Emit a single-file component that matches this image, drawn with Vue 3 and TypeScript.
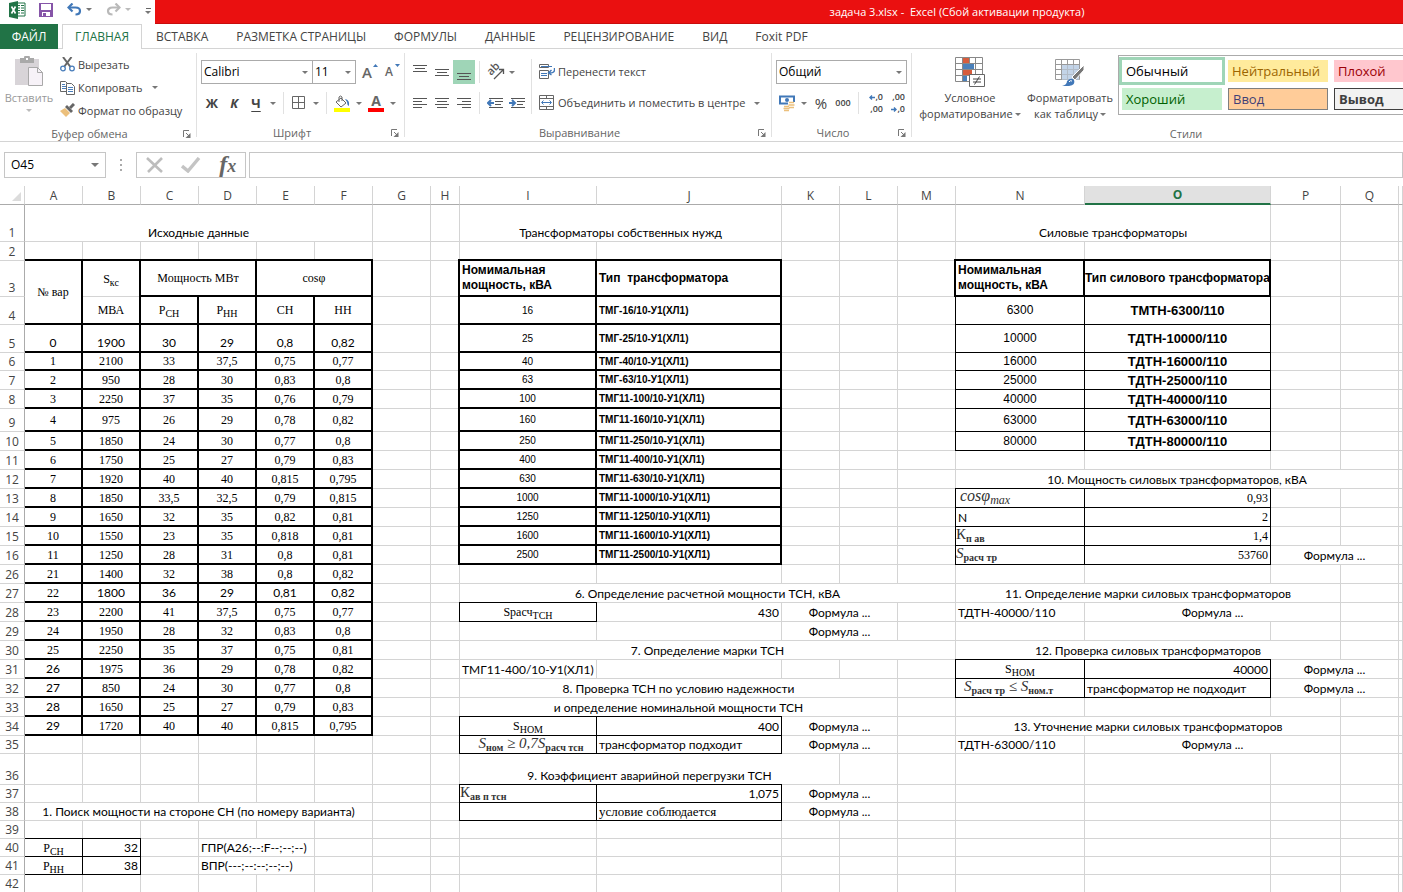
<script setup lang="ts">
import { ref } from 'vue'

interface Cell {
  text: string
  cls: string
  col?: number
  row?: number
}
interface Part {
  t: string
  sub: boolean
}
interface Slot extends Cell {
  key: string
}
interface Row {
  n: number
  h: number
  cells: Slot[]
}

const tabs = ['ГЛАВНАЯ', 'ВСТАВКА', 'РАЗМЕТКА СТРАНИЦЫ', 'ФОРМУЛЫ', 'ДАННЫЕ', 'РЕЦЕНЗИРОВАНИЕ', 'ВИД', 'Foxit PDF']
const activeTab = ref('ГЛАВНАЯ')
const nameBox = ref('O45')
const formula = ref('')

const letters = 'ABCDEFGHIJKLMNOPQR'.split('')
const widths = [58, 58, 58, 58, 58, 58, 58, 29, 137, 185, 58, 58, 58, 129, 186, 70, 58]

const heights: [number, number][] = [
  [1, 37], [2, 19], [3, 36], [4, 28], [5, 28], [6, 18], [7, 19], [8, 19], [9, 23], [10, 19], [11, 19],
  [12, 19], [13, 19], [14, 19], [15, 19], [16, 19], [26, 19], [27, 19], [28, 19], [29, 19], [30, 19],
  [31, 19], [32, 19], [33, 19], [34, 19], [35, 18], [36, 31], [37, 18], [38, 18], [39, 18], [40, 18],
  [41, 18], [42, 18],
]

const sheet: Record<string, Cell> = {}
const put = (at: string, text: string, cls: string, col = 1, row = 1): void => {
  sheet[at] = { text, cls, col, row }
}

put('A1', 'Исходные данные', 'c', 6)
put('I1', 'Трансформаторы собственных нужд', 'c', 2)
put('N1', 'Силовые трансформаторы', 'c', 2)

put('A3', '№ вар', 'thick serif', 1, 2)
put('B3', 'S_{кс}', 'thick serif open-bottom')
put('C3', 'Мощность МВт', 'thick serif', 2)
put('E3', 'cosφ', 'thick serif', 2)
put('B4', 'МВА', 'thick serif open-top')
put('C4', 'P_{СН}', 'thick serif')
put('D4', 'P_{НН}', 'thick serif')
put('E4', 'СН', 'thick serif')
put('F4', 'НН', 'thick serif')

const variants: [number, string][] = [
  [5, '0 1900 30 29 0,8 0,82'],
  [6, '1 2100 33 37,5 0,75 0,77'],
  [7, '2 950 28 30 0,83 0,8'],
  [8, '3 2250 37 35 0,76 0,79'],
  [9, '4 975 26 29 0,78 0,82'],
  [10, '5 1850 24 30 0,77 0,8'],
  [11, '6 1750 25 27 0,79 0,83'],
  [12, '7 1920 40 40 0,815 0,795'],
  [13, '8 1850 33,5 32,5 0,79 0,815'],
  [14, '9 1650 32 35 0,82 0,81'],
  [15, '10 1550 23 35 0,818 0,81'],
  [16, '11 1250 28 31 0,8 0,81'],
  [26, '21 1400 32 38 0,8 0,82'],
  [27, '22 1800 36 29 0,81 0,82'],
  [28, '23 2200 41 37,5 0,75 0,77'],
  [29, '24 1950 28 32 0,83 0,8'],
  [30, '25 2250 35 37 0,75 0,81'],
  [31, '26 1975 36 29 0,78 0,82'],
  [32, '27 850 24 30 0,77 0,8'],
  [33, '28 1650 25 27 0,79 0,83'],
  [34, '29 1720 40 40 0,815 0,795'],
]
for (const [row, line] of variants) {
  line.split(' ').forEach((value, i) => {
    const plain = row === 5 || (row === 27 && i > 0) || (row > 30 && i === 0)
    put(letters[i] + row, value, plain ? 'thick c' : 'thick serif')
  })
}

put('I3', 'Номимальная мощность, кВА', 'thick arial-b')
put('J3', 'Тип\u00a0 трансформатора', 'thick arial-b')
const ownNeeds = ['16', '25', '40', '63', '100', '160', '250', '400', '630', '1000', '1250', '1600', '2500']
ownNeeds.forEach((power, i) => {
  put('I' + (i + 4), power, 'thick small')
  put('J' + (i + 4), `ТМГ${i > 3 ? '11' : ''}-${power}/10-У1(ХЛ1)`, 'thick small-b')
})

put('N3', 'Номимальная мощность, кВА', 'thick arial-b')
put('O3', 'Тип силового трансформатора', 'thick arial-b c')
;['6300', '10000', '16000', '25000', '40000', '63000', '80000'].forEach((power, i) => {
  put('N' + (i + 4), power, 'thin arial')
  put('O' + (i + 4), `${i ? 'ТДТН' : 'ТМТН'}-${power}/110`, 'thin arial-b c brand')
})

put('N12', '10. Мощность силовых трансформаторов, кВА', 'c', 4)
put('N13', 'cosφ_{max}', 'thin math italic')
put('O13', '0,93', 'thin serif r')
put('N14', 'N', 'thin')
put('O14', '2', 'thin serif r')
put('N15', 'К_{п ав}', 'thin math flush')
put('O15', '1,4', 'thin serif r')
put('N16', 'S_{расч тр}', 'thin math flush slant')
put('O16', '53760', 'thin serif r')

put('I27', '6. Определение расчетной мощности ТСН, кВА', 'c', 5)
put('I28', 'Sрасч_{ТСН}', 'thin serif')
put('J28', '430', 'r')
put('I30', '7. Определение марки ТСН', 'c', 5)
put('I31', 'ТМГ11-400/10-У1(ХЛ1)', '')
put('I32', '8. Проверка ТСН по условию надежности', 'c', 4)
put('I33', 'и определение номинальной мощности ТСН', 'c', 4)
put('I34', 'S_{НОМ}', 'thin serif')
put('J34', '400', 'thin r')
put('I35', 'S_{ном} ≥ 0,7S_{расч тсн}', 'thin math slant c')
put('J35', 'трансформатор подходит', 'thin')
put('I36', '9. Коэффициент аварийной перегрузки ТСН', 'c', 3)
put('I37', 'К_{ав п тсн}', 'thin math flush')
put('J37', '1,075', 'thin r')
put('I38', '', 'thin')
put('J38', 'условие соблюдается', 'thin serif l')

put('N27', '11. Определение марки силовых трансформаторов', 'c', 3)
put('N28', 'ТДТН-40000/110', '')
put('N30', '12. Проверка силовых трансформаторов', 'c', 3)
put('N31', 'S_{НОМ}', 'thin serif')
put('O31', '40000', 'thin r')
put('N32', 'S_{расч тр} ≤ S_{ном.т}', 'thin math slant')
put('O32', 'трансформатор не подходит', 'thin')
put('N34', '13. Уточнение марки силовых трансформаторов', 'c', 3)
put('N35', 'ТДТН-63000/110', '')
for (const at of ['K28', 'K29', 'K34', 'K35', 'K37', 'K38', 'P16', 'P31', 'P32', 'O28', 'O35']) {
  put(at, 'Формула ...', 'c', 2)
}

put('A38', '1. Поиск мощности на стороне СН (по номеру варианта)', 'c', 6)
put('A40', 'P_{СН}', 'thin serif')
put('B40', '32', 'thin r')
put('D40', 'ГПР(A26;--:F--;--;--)', '', 2)
put('A41', 'P_{НН}', 'thin serif')
put('B41', '38', 'thin r')
put('D41', 'ВПР(---;--:--;--;--)', '', 2)

const covered = new Set<string>(['A4'])
const rows: Row[] = heights.map(([n, h]) => {
  const cells: Slot[] = []
  letters.forEach((letter, i) => {
    const key = letter + n
    if (covered.has(key)) return
    const cell = sheet[key] ?? { text: '', cls: '' }
    for (let k = 1; k < (cell.col ?? 1); k++) covered.add(letters[i + k] + n)
    cells.push({ ...cell, key })
  })
  return { n, h, cells }
})

const parts = (text: string): Part[] =>
  text.split(/_\{(.+?)\}/).map((t, i) => ({ t, sub: i % 2 === 1 })).filter((p) => p.t !== '')
</script>

<template>
  <div class="app">
    <header class="titlebar">
      <div class="quick">
        <svg class="logo" width="18" height="18" viewBox="0 0 18 18">
          <path d="M8 2h9v13H8z" fill="#fff" stroke="#217346" />
          <path d="M10 4.500h2M13 4.500h3M10 7h2M13 7h3M10 9.500h2M13 9.500h3M10 12h2M13 12h3" stroke="#217346" />
          <path d="M1 2l9-2v18l-9-2z" fill="#217346" />
          <path d="M3.500 5.500l4 7M7.500 5.500l-4 7" stroke="#fff" stroke-width="1.600" />
        </svg>
        <button class="q" aria-label="Сохранить">
          <svg width="14" height="14" viewBox="0 0 14 14">
            <path d="M0 0h14v14H0z" fill="#8655a8" /><path d="M2 1h10v6H2z" fill="#fff" />
            <path d="M3 9h8v4H3z" fill="#fff" /><path d="M4 10h3v3H4z" fill="#8655a8" />
          </svg>
        </button>
        <button class="q" aria-label="Отменить">
          <svg width="15" height="13" viewBox="0 0 15 13">
            <path d="M2 4.500h6.500c6 0 6 7 0 7" fill="none" stroke="#4178b8" stroke-width="2.200" />
            <path d="M5.500 .5L1.500 4.500l4 4" fill="none" stroke="#4178b8" stroke-width="2.200" />
          </svg>
          <i class="arr"></i>
        </button>
        <button class="q" aria-label="Вернуть">
          <svg width="15" height="13" viewBox="0 0 15 13">
            <path d="M13 4.500H6.500c-6 0-6 7 0 7" fill="none" stroke="#b9b9b9" stroke-width="2.200" />
            <path d="M9.500 .5l4 4-4 4" fill="none" stroke="#b9b9b9" stroke-width="2.200" />
          </svg>
          <i class="arr pale"></i>
        </button>
        <button class="q more" aria-label="Настройка панели"><i class="bar"></i><i class="arr"></i></button>
      </div>
      <div class="title">задача 3.xlsx -&nbsp; Excel (Сбой активации продукта)</div>
    </header>

    <nav class="tabs">
      <button class="file">ФАЙЛ</button>
      <button
        v-for="tab in tabs"
        :key="tab"
        class="tab"
        :class="{ on: tab === activeTab }"
        @click="activeTab = tab"
      >{{ tab }}</button>
    </nav>

    <section class="ribbon">
      <div class="group clip">
        <div class="body">
          <button class="paste">
            <svg width="30" height="31" viewBox="0 0 30 31">
              <path d="M1 3h24v26H1z" fill="#d8d4d8" />
              <path d="M6 2h4a3 3 0 0 1 6 0h4v5H6z" fill="#a9a9a9" /><path d="M12 2h2v2h-2z" fill="#fff" />
              <path d="M14.500 11.500h9l5 5v13h-14z" fill="#f7f2f8" stroke="#a9a9a9" />
              <path d="M23.500 11.500v5h5" fill="none" stroke="#a9a9a9" />
            </svg>
            <span>Вставить</span>
            <i class="arr pale"></i>
          </button>
          <div class="list">
            <button class="line">
              <svg width="15" height="15" viewBox="0 0 15 15">
                <path d="M3 0l7.500 10M11.500 0L4 10" stroke="#666" stroke-width="2" />
                <circle cx="3" cy="11.500" r="2.300" fill="none" stroke="#4a7ebb" stroke-width="1.300" />
                <circle cx="12" cy="11.500" r="2.300" fill="none" stroke="#4a7ebb" stroke-width="1.300" />
              </svg>Вырезать
            </button>
            <button class="line">
              <svg width="15" height="15" viewBox="0 0 15 15">
                <path d="M.5 1.500h5l2 2v8h-7z" fill="#fff" stroke="#666" />
                <path d="M2 4.500h3M2 6.500h4M2 8.500h4" stroke="#4a7ebb" />
                <path d="M6.500 3.500h5l3 3v8h-8z" fill="#fff" stroke="#666" />
                <path d="M8 7.500h5M8 9.500h5M8 11.500h5" stroke="#4a7ebb" />
              </svg>Копировать<i class="arr gap"></i>
            </button>
            <button class="line">
              <svg width="15" height="15" viewBox="0 0 15 15">
                <path d="M0 8l5-3 5 5-4 4z" fill="#ecc07c" />
                <path d="M5 4l2-2 6 6-2 2z" fill="#666" /><path d="M10 5l4-4" stroke="#666" stroke-width="3" />
              </svg>Формат по образцу
            </button>
          </div>
        </div>
        <footer><span>Буфер обмена</span><button class="launch" aria-label="Буфер обмена"><svg width="8" height="8" viewBox="0 0 8 8"><path d="M.5 7V.5H6M3 3l3 3" fill="none" stroke="#777" /><path d="M7.500 3v5h-5z" fill="#777" /></svg></button></footer>
      </div>

      <div class="group">
        <div class="body rows">
          <div class="r1">
            <span class="pick family"><select aria-label="Шрифт"><option>Calibri</option></select><i class="arr"></i></span>
            <span class="pick size"><select aria-label="Размер"><option>11</option></select><i class="arr"></i></span>
            <button class="ic" aria-label="Увеличить размер шрифта"><span class="big-a">A</span><svg class="tip" width="5" height="3"><path d="M0 3l2.500-3L5 3z" fill="#4178b8" /></svg></button>
            <button class="ic" aria-label="Уменьшить размер шрифта"><span class="small-a">A</span><svg class="tip" width="5" height="3"><path d="M0 0h5L2.500 3z" fill="#4178b8" /></svg></button>
          </div>
          <div class="r1">
            <button class="ic b">Ж</button>
            <button class="ic b it">К</button>
            <button class="ic b un">Ч</button>
            <button class="dd" aria-label="Подчеркивание"><i class="arr"></i></button>
            <i class="sep"></i>
            <button class="ic" aria-label="Границы">
              <svg width="14" height="14" viewBox="0 0 14 14"><path d="M.5 .5h12v12H.5zM6.500 .5v12M.5 6.500h12" fill="none" stroke="#666" /></svg>
            </button>
            <button class="dd" aria-label="Виды границ"><i class="arr"></i></button>
            <i class="sep"></i>
            <button class="ic" aria-label="Цвет заливки">
              <svg width="16" height="17" viewBox="0 0 16 17">
                <path d="M7 3l5 5-5 4-5-5z" fill="#fff" stroke="#666" /><path d="M5 7V2q1.500-2 3 0v4" fill="none" stroke="#666" />
                <path d="M11 4q5 1 4 7-2-1-2-4z" fill="#4178b8" /><path d="M0 13h16v4H0z" fill="#ff0" />
              </svg>
            </button>
            <button class="dd" aria-label="Цвета заливки"><i class="arr"></i></button>
            <button class="ic color" aria-label="Цвет текста"><span>A</span></button>
            <button class="dd" aria-label="Цвета текста"><i class="arr"></i></button>
          </div>
        </div>
        <footer><span>Шрифт</span><button class="launch" aria-label="Шрифт"><svg width="8" height="8" viewBox="0 0 8 8"><path d="M.5 7V.5H6M3 3l3 3" fill="none" stroke="#777" /><path d="M7.500 3v5h-5z" fill="#777" /></svg></button></footer>
      </div>

      <div class="group align">
        <div class="body">
          <div class="rows">
            <div class="r1">
              <button class="ic" aria-label="По верхнему краю"><svg width="14" height="16"><path d="M0 1.500h14M2 4.500h10M0 7.500h14" stroke="#555" /></svg></button>
              <button class="ic" aria-label="По середине"><svg width="14" height="16"><path d="M0 5.500h14M2 8.500h10M0 11.500h14" stroke="#555" /></svg></button>
              <button class="ic on" aria-label="По нижнему краю"><svg width="14" height="16"><path d="M0 9.500h14M2 12.500h10M0 15.500h14" stroke="#555" /></svg></button>
              <i class="sep"></i>
              <button class="ic" aria-label="Ориентация">
                <svg class="turn" width="17" height="16" viewBox="0 0 17 16">
                  <text x="4" y="12" transform="rotate(-45 4 12)" font-family="Open Sans, sans-serif" font-size="11" fill="#555" font-weight="600">ab</text>
                  <path d="M7 15l9-9M12 5.500h4.500V10" fill="none" stroke="#555" stroke-width="1.300" />
                </svg>
              </button>
              <button class="dd" aria-label="Варианты ориентации"><i class="arr"></i></button>
            </div>
            <div class="r1">
              <button class="ic" aria-label="По левому краю"><svg width="14" height="12"><path d="M0 1.500h14M0 4.500h9M0 7.500h14M0 10.500h9" stroke="#555" /></svg></button>
              <button class="ic" aria-label="По центру"><svg width="14" height="12"><path d="M0 1.500h14M2 4.500h10M0 7.500h14M2 10.500h10" stroke="#555" /></svg></button>
              <button class="ic" aria-label="По правому краю"><svg width="14" height="12"><path d="M0 1.500h14M5 4.500h9M0 7.500h14M5 10.500h9" stroke="#555" /></svg></button>
              <i class="sep"></i>
              <button class="ic" aria-label="Уменьшить отступ">
                <svg width="16" height="12"><path d="M2 1.500h14M8 4.500h8M8 7.500h6M2 10.500h14" stroke="#555" /><path d="M7 6H2M4 3L1 6l3 3" fill="none" stroke="#4178b8" stroke-width="2" /></svg>
              </button>
              <button class="ic" aria-label="Увеличить отступ">
                <svg width="16" height="12"><path d="M2 1.500h14M8 4.500h8M8 7.500h6M2 10.500h14" stroke="#555" /><path d="M0 6h5M3 3l3 3-3 3" fill="none" stroke="#4178b8" stroke-width="2" /></svg>
              </button>
            </div>
          </div>
          <i class="sep tall"></i>
          <div class="rows">
            <button class="line r1">
              <svg width="16" height="16" viewBox="0 0 16 16">
                <path d="M.5 .5h9v3h-9zM.5 6.500h9v8h-9z" fill="#fff" stroke="#666" /><path d="M2 2.500h11M2 9.500h6M2 11.500h6" stroke="#4178b8" />
                <path d="M15.500 4v2q0 3-5 3M12.500 6l-3 3 3 2" fill="none" stroke="#4178b8" stroke-width="1.400" />
              </svg>Перенести текст
            </button>
            <button class="line r1">
              <svg width="16" height="16" viewBox="0 0 16 16">
                <path d="M.5 .5h14v14H.5zM.5 3.500h14M.5 11.500h14M7.500 .5v3M7.500 11.500v3" fill="none" stroke="#666" />
                <path d="M3 7.500h9M4.500 5.500l-2 2 2 2M10.500 5.500l2 2-2 2" fill="none" stroke="#4178b8" />
              </svg>Объединить и поместить в центре<i class="arr gap"></i>
            </button>
          </div>
        </div>
        <footer><span>Выравнивание</span><button class="launch" aria-label="Выравнивание"><svg width="8" height="8" viewBox="0 0 8 8"><path d="M.5 7V.5H6M3 3l3 3" fill="none" stroke="#777" /><path d="M7.500 3v5h-5z" fill="#777" /></svg></button></footer>
      </div>

      <div class="group">
        <div class="body rows">
          <div class="r1">
            <span class="pick number"><select aria-label="Числовой формат"><option>Общий</option></select><i class="arr"></i></span>
          </div>
          <div class="r1">
            <button class="ic" aria-label="Финансовый формат">
              <svg width="17" height="17" viewBox="0 0 17 17">
                <path d="M1 1.500h14v7H1z" fill="#fff" stroke="#4178b8" stroke-width="2" /><circle cx="8" cy="5" r="2" fill="#4178b8" />
                <path d="M9 7h7v8H9zM4 11h7v5H4z" fill="#fff" />
                <path d="M10 7.500h5M9.500 10h6M10 12.500h5M5 11.500h5M4.500 13.500h6M5 15.500h5" stroke="#ecc07c" stroke-width="1.600" />
              </svg>
            </button>
            <button class="dd" aria-label="Валюты"><i class="arr"></i></button>
            <button class="ic pct">%</button>
            <button class="ic zeros">000</button>
            <i class="sep"></i>
            <button class="ic dec" aria-label="Увеличить разрядность">
              <span><svg width="6" height="5"><path d="M6 2.500H1M3 .5l-2 2 2 2" fill="none" stroke="#4178b8" stroke-width="1.400" /></svg>,0</span><span>,00</span>
            </button>
            <button class="ic dec" aria-label="Уменьшить разрядность">
              <span>,00</span><span><svg width="6" height="5"><path d="M0 2.500h5M3 .5l2 2-2 2" fill="none" stroke="#4178b8" stroke-width="1.400" /></svg>,0</span>
            </button>
          </div>
        </div>
        <footer><span>Число</span><button class="launch" aria-label="Число"><svg width="8" height="8" viewBox="0 0 8 8"><path d="M.5 7V.5H6M3 3l3 3" fill="none" stroke="#777" /><path d="M7.500 3v5h-5z" fill="#777" /></svg></button></footer>
      </div>

      <div class="group styles">
        <div class="body">
          <button class="large cond">
            <svg width="30" height="31" viewBox="0 0 30 31">
              <path d="M.5 .5h27v24H.5z" fill="#fff" /><path d="M8 0h6v6H8zM8 13h9v5H8z" fill="#d65c3c" /><path d="M8 7h11v5H8zM8 19h4v6H8z" fill="#4a80ba" />
              <path d="M.5 .5h27v24H.5zM.5 6.500h27M.5 12.500h27M.5 18.500h27M7.500 .5v24M20.500 .5v24M14.500 .5v6" fill="none" stroke="#888" />
              <path d="M14.500 17.500h15v12h-15z" fill="#fff" stroke="#666" />
              <path d="M18 22h8M18 25h8M24.500 19.500l-5 8" stroke="#444" />
            </svg>
            <span>Условное</span><span>форматирование<i class="arr"></i></span>
          </button>
          <button class="large fmt">
            <svg width="30" height="31" viewBox="0 0 30 31">
              <path d="M.5 2.500h24v20H.5z" fill="#fff" /><path d="M7 8h17v15H7z" fill="#c3d4e8" />
              <path d="M.5 2.500h24v20H.5zM.5 7.500h24M.5 12.500h24M.5 17.500h24M6.500 2.500v20M12.500 2.500v20M18.500 2.500v20" fill="none" stroke="#999" />
              <path d="M7 8h17v15H7z" fill="#c3d4e8" fill-opacity=".6" />
              <path d="M29 8v5l-9 10-3-3z" fill="#777" stroke="#fff" /><path d="M7 29q5-1 5-5 4-4 7-1 2 5-5 6z" fill="#4178b8" />
              <path d="M14 25q1-2 3-1" fill="none" stroke="#fff" />
            </svg>
            <span>Форматировать</span><span>как таблицу<i class="arr"></i></span>
          </button>
          <div class="gallery">
            <button class="sw normal">Обычный</button>
            <button class="sw neutral">Нейтральный</button>
            <button class="sw bad">Плохой</button>
            <button class="sw good">Хороший</button>
            <button class="sw input">Ввод</button>
            <button class="sw output">Вывод</button>
          </div>
        </div>
        <footer><span>Стили</span></footer>
      </div>
    </section>

    <section class="fbar">
      <div class="name"><input v-model="nameBox" aria-label="Имя" /><button aria-label="Список имен"><i class="arr wide"></i></button></div>
      <i class="dots"></i>
      <div class="fx">
        <button aria-label="Отмена"><svg width="18" height="16" viewBox="0 0 18 16"><path d="M1 1l15 14M16 1L2 15" stroke="#bdbdbd" stroke-width="2.600" /></svg></button>
        <button aria-label="Ввод"><svg width="20" height="16" viewBox="0 0 20 16"><path d="M1 9l6 5L18 1" fill="none" stroke="#c4c4c4" stroke-width="3.400" /></svg></button>
        <button class="fn" aria-label="Вставить функцию">f<small>x</small></button>
      </div>
      <input v-model="formula" class="formula" aria-label="Строка формул" />
    </section>

    <main class="sheet">
      <table>
        <colgroup>
          <col class="rowhead" />
          <col v-for="(w, i) in widths" :key="i" :style="{ width: w + 'px' }" />
          <col />
        </colgroup>
        <thead>
          <tr>
            <th class="corner"><svg width="9" height="9"><path d="M9 0v9H0z" fill="#dcdcdc" /></svg></th>
            <th v-for="l in letters" :key="l" scope="col" :class="{ sel: l === 'O' }">{{ l === 'R' ? '' : l }}</th>
          </tr>
        </thead>
        <tbody>
          <tr v-for="row in rows" :key="row.n" :style="{ height: row.h + 'px' }">
            <th scope="row">{{ row.n }}</th>
            <td v-for="cell in row.cells" :key="cell.key" :class="cell.cls" :colspan="cell.col" :rowspan="cell.row"><template v-for="(p, i) in parts(cell.text)" :key="i"><sub v-if="p.sub">{{ p.t }}</sub><span v-else>{{ p.t }}</span></template></td>
          </tr>
        </tbody>
      </table>
    </main>
  </div>
</template>

<style>
body {
  margin: 0;
  background: #fff;
}
</style>

<style scoped>
.app {
  display: flex;
  flex-direction: column;
  height: 100vh;
  overflow: hidden;
  background: #fff;
  color: #444;
  font: 12px/16px "Open Sans", "Noto Sans", sans-serif;
}
button,
input,
select {
  margin: 0;
  padding: 0;
  border: 0;
  border-radius: 0;
  background: none;
  color: inherit;
  font: inherit;
  white-space: nowrap;
}
svg {
  display: block;
  flex: none;
}
.arr {
  display: block;
  flex: none;
  width: 0;
  border: 3px solid transparent;
  border-top-color: #777;
  border-bottom: 0;
}
.arr.pale {
  border-top-color: #bbb;
}
.arr.wide {
  border-width: 4px 4px 0;
}

/* title bar */
.titlebar {
  display: flex;
  flex: none;
  height: 24px;
}
.quick {
  display: flex;
  align-items: flex-start;
  box-sizing: border-box;
  width: 155px;
  padding: 1px 0 0 8px;
}
.logo {
  margin-right: 13px;
}
.q {
  display: flex;
  align-items: center;
  gap: 4px;
  height: 17px;
  margin-right: 14px;
}
.more {
  flex-direction: column;
  justify-content: center;
  gap: 2px;
  height: 20px;
  margin: 0;
}
.bar {
  width: 5px;
  height: 1px;
  background: #666;
}
.title {
  flex: 1;
  box-sizing: border-box;
  padding-left: 356px;
  border-bottom: 1px solid #c80c0c;
  background: #ea1010;
  color: #fff;
  font-size: 11px;
  line-height: 24px;
  text-align: center;
  white-space: nowrap;
}

/* tabs */
.tabs {
  display: flex;
  flex: none;
  height: 25px;
  box-shadow: inset 0 -1px #d4d4d4;
}
.file {
  width: 58px;
  margin-right: 4px;
  background: #217346;
  color: #fff;
}
.tab {
  padding: 0 14px;
}
.tab.on {
  padding: 0 12px;
  border: 1px solid #d4d4d4;
  border-bottom: 0;
  background: #fff;
  color: #217346;
}

/* ribbon */
.ribbon {
  display: flex;
  flex: none;
  height: 84px;
  padding: 4px 0;
  border-bottom: 1px solid #d4d4d4;
  overflow: hidden;
  font-size: 11px;
}
.group {
  display: flex;
  flex: none;
  flex-direction: column;
  border-right: 1px solid #e1e1e1;
}
.group.styles {
  width: 548px;
}
.body {
  display: flex;
  flex: 1;
  padding: 0 4px;
}
.rows {
  display: flex;
  flex-direction: column;
  gap: 7px;
  padding-top: 7px;
}
.body > .rows {
  flex: none;
}
.group footer {
  display: flex;
  height: 16px;
  color: #666;
  line-height: 24px;
}
.group footer span {
  flex: 1;
  text-align: center;
}
.launch {
  width: 17px;
  padding: 7px 4px 0;
}
.clip .body {
  width: 192px;
  padding: 0 4px 0 0;
}
.paste {
  display: flex;
  flex-direction: column;
  align-items: center;
  width: 60px;
  padding: 3px 2px 0 0;
  color: #999;
}
.paste span {
  margin: 3px 0;
}
.list .line {
  height: 23px;
}
.line {
  display: flex;
  align-items: center;
  gap: 3px;
}
.gap {
  margin-left: 6px;
}
.r1 {
  display: flex;
  align-items: center;
  height: 24px;
}
.pick {
  display: flex;
  align-items: center;
  box-sizing: border-box;
  height: 24px;
  border: 1px solid #ababab;
  color: #000;
  font-size: 12px;
}
.pick select {
  flex: 1;
  width: 10px;
  height: 22px;
  padding-left: 2px;
  appearance: none;
}
.pick .arr {
  margin-right: 4px;
}
.family {
  width: 112px;
}
.size {
  width: 44px;
  margin-left: -1px;
}
.number {
  width: 131px;
}
.ic {
  position: relative;
  display: flex;
  align-items: center;
  justify-content: center;
  width: 22px;
  height: 24px;
}
.ic.on {
  background: #9fd5b7;
}
.b {
  font-weight: 700;
  font-size: 13px;
}
.it {
  font-style: italic;
}
.un {
  text-decoration: underline;
  text-underline-offset: 3px;
}
.big-a {
  font-size: 15px;
  font-weight: 600;
  color: #666;
}
.small-a {
  font-size: 12px;
  font-weight: 600;
  color: #666;
}
.tip {
  position: absolute;
  top: 4px;
  right: 0;
}
.turn {
  overflow: visible;
}
.color span {
  width: 16px;
  border-bottom: 4px solid #f00;
  color: #666;
  font-size: 14px;
  font-weight: 700;
  line-height: 14px;
}
.dd {
  display: flex;
  justify-content: center;
  width: 12px;
}
.sep {
  width: 1px;
  height: 22px;
  margin: 0 4px;
  background: #e1e1e1;
}
.sep.tall {
  height: 55px;
  margin: 6px 4px 0 3px;
}
.align .line {
  padding-left: 3px;
}
.align .body {
  width: 358px;
}
.pct {
  font-size: 15px;
}
.zeros {
  font-size: 9px;
  font-weight: 600;
}
.dec {
  flex-direction: column;
  align-items: flex-end;
  padding-right: 2px;
  font-size: 9px;
  font-weight: 600;
  line-height: 12px;
}
.dec span {
  display: flex;
  align-items: center;
}
.styles .body {
  gap: 4px;
  padding-left: 6px;
}
.large {
  display: flex;
  flex-direction: column;
  align-items: center;
  padding-top: 4px;
}
.cond {
  width: 104px;
}
.fmt {
  width: 88px;
}
.large span {
  display: flex;
  align-items: center;
  gap: 2px;
}
.large svg {
  margin-bottom: 2px;
}
.gallery {
  display: grid;
  grid-template-columns: 100px 100px 100px;
  grid-template-rows: 22px 22px;
  gap: 6px;
  box-sizing: border-box;
  flex: none;
  height: 60px;
  margin-top: 2px;
  padding: 4px 3px;
  border: 1px solid #ababab;
}
.sw {
  box-sizing: border-box;
  padding: 0 4px;
  font-size: 13px;
  text-align: left;
}
.normal {
  outline: 3px solid #9fd5b7;
  color: #000;
}
.neutral {
  background: #ffeb9c;
  color: #9c6500;
}
.bad {
  background: #ffc7ce;
  color: #9c0006;
}
.good {
  background: #c6efce;
  color: #006100;
}
.input {
  border: 1px solid #7f7f7f;
  background: #ffcc99;
  color: #3f3f76;
}
.output {
  border: 1px solid #3f3f3f;
  background: #f2f2f2;
  color: #3f3f3f;
  font-weight: 700;
}

/* formula bar */
.fbar {
  display: flex;
  flex: none;
  height: 26px;
  padding: 10px 0 8px 4px;
}
.name,
.fx,
.formula {
  display: flex;
  align-items: center;
  box-sizing: border-box;
  border: 1px solid #c6c6c6;
  color: #000;
}
.name {
  width: 102px;
}
.name input {
  flex: 1;
  width: 10px;
  padding-left: 6px;
}
.name button {
  padding-right: 6px;
}
.dots {
  width: 2px;
  height: 12px;
  margin: 7px 14px;
  background: repeating-linear-gradient(#aaa 0 2px, transparent 2px 5px);
}
.fx {
  justify-content: space-around;
  width: 110px;
}
.fn {
  color: #666;
  font: italic 700 24px/24px "Liberation Serif", serif;
}
.fn small {
  font-size: 18px;
}
.formula {
  flex: 1;
  margin-left: 3px;
}

/* grid */
.sheet {
  flex: 1;
  min-height: 0;
  overflow: hidden;
}
table {
  width: 100%;
  table-layout: fixed;
  border-collapse: separate;
  border-spacing: 0;
}
.rowhead {
  width: 25px;
}
th,
td {
  box-sizing: border-box;
  padding: 0 2px;
  border: 0 solid #d4d4d4;
  border-width: 0 1px 1px 0;
  line-height: 16px;
  white-space: nowrap;
}
th {
  font-weight: 400;
}
thead th {
  height: 19px;
  padding-top: 2px;
  border-bottom-color: #ababab;
}
thead .sel {
  padding-top: 1px;
  border-bottom: 2px solid #217346;
  background: #e1e1e1;
  color: #217346;
  font-weight: 700;
}
.corner svg {
  margin-left: 10px;
}
tbody th {
  border-right-color: #ababab;
  vertical-align: bottom;
}
td {
  color: #000;
  font-family: Lato, "Open Sans", sans-serif;
  font-size: 12px;
  vertical-align: bottom;
}
.c {
  text-align: center;
}
.serif {
  font-family: "Liberation Serif", serif;
  text-align: center;
  vertical-align: middle;
}
.r {
  text-align: right;
}
.l {
  font-size: 13px;
  text-align: left;
}
.arial,
.arial-b,
.small,
.small-b {
  font-family: "Liberation Sans", sans-serif;
  font-size: 12px;
  line-height: 15px;
  vertical-align: middle;
}
.arial-b {
  font-weight: 700;
  white-space: normal;
}
.arial-b.c {
  padding: 0;
  white-space: nowrap;
}
.arial-b.brand {
  font-size: 13px;
}
.arial,
.small {
  text-align: center;
}
.small,
.small-b {
  font-size: 10px;
}
.small-b {
  font-weight: 700;
}
.thin {
  border-color: #000;
  box-shadow: -1px 0 #000, 0 -1px #000, -1px -1px #000;
}
.thick {
  border-color: #000;
  border-width: 0 2px 2px 0;
  box-shadow: -2px 0 #000, 0 -2px #000, -2px -2px #000;
}
.thick:nth-child(2) {
  box-shadow: 0 -2px #000;
}
.thin:nth-child(2) {
  box-shadow: 0 -1px #000;
}
.open-bottom {
  border-bottom: 1px solid #d4d4d4;
}
.thick.open-top {
  box-shadow: -2px 0 #000;
}
sub {
  font-size: 10px;
  line-height: 0;
  vertical-align: -3px;
}
.math {
  padding-left: 8px;
  color: #333;
  font-family: "Liberation Serif", serif;
  font-size: 15px;
  line-height: 14px;
  vertical-align: top;
}
.math.flush {
  padding-left: 0;
}
.math.italic {
  padding-left: 4px;
  font-size: 16px;
}
.math.italic,
.slant span {
  font-style: italic;
}
.math.italic sub {
  font-size: 12px;
}
.math:not(.italic) sub {
  font-weight: 700;
}
</style>
